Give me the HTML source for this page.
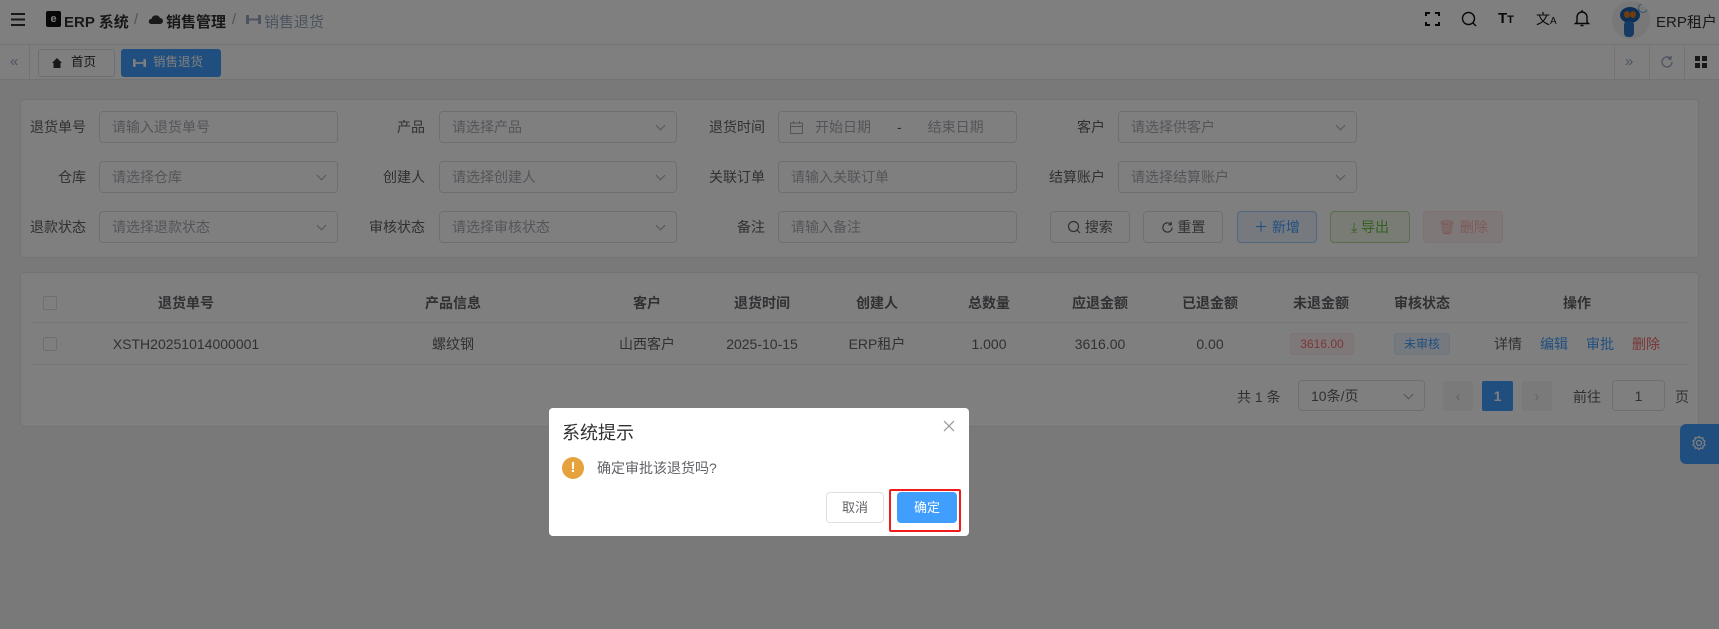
<!DOCTYPE html>
<html><head><meta charset="utf-8">
<style>
*{box-sizing:border-box;margin:0;padding:0}
body{width:1719px;height:629px;overflow:hidden;background:#f2f3f5;font-family:"Liberation Sans","Noto Sans CJK SC",sans-serif;font-size:14px;color:#606266;position:relative}
.a{position:absolute}
.hdr{left:0;top:0;width:1719px;height:45px;background:#fff;border-bottom:1px solid #e6e6e6}
.tabs{left:0;top:45px;width:1719px;height:35px;background:#fff;border-bottom:1px solid #e6e6e6}
.card{background:#fff;border:1px solid #e4e7ed;border-radius:4px}
.lbl{font-size:14px;color:#606266;text-align:right;width:80px;line-height:32px}
.inp{height:32px;border:1px solid #dcdfe6;border-radius:4px;background:#fff;color:#a8abb2;line-height:30px;padding-left:12px;font-size:14px}
.inp .ar{position:absolute;right:12px;top:10px;width:7px;height:7px;border-right:1px solid #a8abb2;border-bottom:1px solid #a8abb2;transform:rotate(45deg)}
.btn{height:32px;width:80px;border:1px solid #dcdfe6;border-radius:4px;background:#fff;line-height:30px;text-align:center;font-size:14px;color:#606266}
.th{font-weight:bold;color:#606266;text-align:center;line-height:20px}
.td{text-align:center;line-height:20px;color:#606266}
.cb{width:14px;height:14px;border:1px solid #dcdfe6;border-radius:2px;background:#fff}
.ov{left:0;top:0;width:1719px;height:629px;background:rgba(0,0,0,.5);z-index:5}
.dlg{z-index:10}
</style></head><body>
<div class="a hdr"></div>
<svg class="a" style="left:11px;top:13px" width="14" height="13" viewBox="0 0 14 13"><rect x="0" y="0" width="14" height="2" fill="#303133"/><rect x="0" y="5.5" width="14" height="2" fill="#303133"/><rect x="0" y="11" width="14" height="2" fill="#303133"/></svg>
<div class="a" style="left:46px;top:11px;width:15px;height:16px;background:#111;border-radius:2px;color:#fff;font-size:11px;font-weight:bold;text-align:center;line-height:16px">e</div>
<div class="a" style="left:64px;top:11px;font-size:15px;font-weight:bold;color:#303133">ERP 系统</div>
<div class="a" style="left:134px;top:11px;font-size:15px;color:#97a8be">/</div>
<svg class="a" style="left:148px;top:12px" width="15" height="13" viewBox="0 0 15 13"><path d="M3 12h9a3 3 0 0 0 0-6 4.5 4.5 0 0 0-8.5 1A2.5 2.5 0 0 0 3 12z" fill="#303133"/></svg>
<div class="a" style="left:166px;top:11px;font-size:15px;font-weight:bold;color:#303133">销售管理</div>
<div class="a" style="left:232px;top:11px;font-size:15px;color:#97a8be">/</div>
<svg class="a" style="left:246px;top:15px" width="15" height="9" viewBox="0 0 15 9"><rect x="0" y="0" width="3" height="9" fill="#97a8be"/><rect x="12" y="0" width="3" height="9" fill="#97a8be"/><rect x="3" y="3.5" width="9" height="2" fill="#97a8be"/></svg>
<div class="a" style="left:264px;top:11px;font-size:15px;color:#97a8be">销售退货</div>
<svg class="a" style="left:1425px;top:12px" width="15" height="14" viewBox="0 0 15 14" fill="none" stroke="#111" stroke-width="2"><path d="M1 4V1h4M10 1h4v3M14 10v3h-4M5 13H1v-3"/></svg>
<svg class="a" style="left:1461px;top:11px" width="16" height="16" viewBox="0 0 16 16" fill="none" stroke="#111" stroke-width="1.4"><circle cx="7.5" cy="7.5" r="6"/><path d="M12 12l3 3"/></svg>
<div class="a" style="left:1498px;top:10px;font-size:15px;font-weight:bold;color:#111">T<span style="font-size:11px">T</span></div>
<div class="a" style="left:1536px;top:9px;font-size:14px;color:#111">文<span style="font-size:10px">A</span></div>
<svg class="a" style="left:1574px;top:9px" width="16" height="18" viewBox="0 0 16 18" fill="none" stroke="#111" stroke-width="1.4"><path d="M3 13V8a5 5 0 0 1 10 0v5l1.5 1.5h-13z"/><path d="M8 1v2M6.5 16.5h3"/></svg>
<div class="a" style="left:1612px;top:1px;width:38px;height:38px;border-radius:50%;background:#f0f0f0;overflow:hidden"><div class="a" style="left:8px;top:6px;width:20px;height:16px;background:#1b5fae;border-radius:50%"></div><div class="a" style="left:12px;top:10px;width:6px;height:7px;background:#e07b20;border-radius:50%"></div><div class="a" style="left:18px;top:10px;width:6px;height:7px;background:#e07b20;border-radius:50%"></div><div class="a" style="left:12px;top:20px;width:10px;height:16px;background:#2a74c8;border-radius:4px"></div><div class="a" style="left:26px;top:2px;width:10px;height:10px;border:1px solid #6aa5e6;border-radius:50%"></div></div>
<div class="a" style="left:1656px;top:11px;font-size:15px;color:#303133">ERP租户</div>

<div class="a tabs"></div>
<div class="a" style="left:10px;top:53px;font-size:15px;color:#97a8be">«</div>
<div class="a" style="left:29px;top:45px;width:1px;height:35px;background:#e6e6e6"></div>
<div class="a" style="left:38px;top:49px;width:77px;height:28px;border:1px solid #d8dce5;border-radius:3px;background:#fff"></div>
<svg class="a" style="left:52px;top:58px" width="10" height="10" viewBox="0 0 10 10"><path d="M5 0L0 5h1.5v5h7V5H10z" fill="#303133"/></svg>
<div class="a" style="left:71px;top:54px;font-size:12.5px;line-height:16px;color:#303133">首页</div>
<div class="a" style="left:121px;top:49px;width:100px;height:28px;background:#409eff;border-radius:3px"></div>
<svg class="a" style="left:133px;top:59px" width="13" height="8" viewBox="0 0 15 9"><rect x="0" y="0" width="3" height="9" fill="#fff"/><rect x="12" y="0" width="3" height="9" fill="#fff"/><rect x="3" y="3.5" width="9" height="2" fill="#fff"/></svg>
<div class="a" style="left:153px;top:54px;font-size:12.5px;line-height:16px;color:#fff">销售退货</div>
<div class="a" style="left:1614px;top:45px;width:1px;height:35px;background:#e6e6e6"></div>
<div class="a" style="left:1649px;top:45px;width:1px;height:35px;background:#e6e6e6"></div>
<div class="a" style="left:1684px;top:45px;width:1px;height:35px;background:#e6e6e6"></div>
<div class="a" style="left:1625px;top:53px;font-size:15px;color:#97a8be">»</div>
<svg class="a" style="left:1660px;top:55px" width="14" height="14" viewBox="0 0 14 14" fill="none" stroke="#97a8be" stroke-width="1.3"><path d="M12 7a5 5 0 1 1-1.5-3.6M11 1v3H8"/></svg>
<svg class="a" style="left:1695px;top:56px" width="12" height="12" viewBox="0 0 12 12" fill="#303133"><rect width="5" height="5"/><rect x="7" width="5" height="5"/><rect y="7" width="5" height="5"/><rect x="7" y="7" width="5" height="5"/></svg>

<div class="a card" style="left:20px;top:99px;width:1679px;height:159px"></div>
<div class="a lbl" style="left:6px;top:111px">退货单号</div>
<div class="a inp" style="left:99px;top:111px;width:239px">请输入退货单号</div>
<div class="a lbl" style="left:345px;top:111px">产品</div>
<div class="a inp" style="left:439px;top:111px;width:238px">请选择产品<i class="ar"></i></div>
<div class="a lbl" style="left:685px;top:111px">退货时间</div>
<div class="a inp" style="left:778px;top:111px;width:239px;padding-left:38px"><svg class="a" style="left:11px;top:9px" width="13" height="13" viewBox="0 0 13 13" fill="none" stroke="#a8abb2"><rect x=".5" y="2" width="12" height="10.5"/><path d="M.5 5.5h12M3.5 0v3M9.5 0v3"/></svg><span style="margin-left:-2px">开始日期</span><span style="margin-left:26px;color:#606266">-</span><span style="margin-left:26px">结束日期</span></div>
<div class="a lbl" style="left:1025px;top:111px">客户</div>
<div class="a inp" style="left:1118px;top:111px;width:239px">请选择供客户<i class="ar"></i></div>

<div class="a lbl" style="left:6px;top:161px">仓库</div>
<div class="a inp" style="left:99px;top:161px;width:239px">请选择仓库<i class="ar"></i></div>
<div class="a lbl" style="left:345px;top:161px">创建人</div>
<div class="a inp" style="left:439px;top:161px;width:238px">请选择创建人<i class="ar"></i></div>
<div class="a lbl" style="left:685px;top:161px">关联订单</div>
<div class="a inp" style="left:778px;top:161px;width:239px">请输入关联订单</div>
<div class="a lbl" style="left:1025px;top:161px">结算账户</div>
<div class="a inp" style="left:1118px;top:161px;width:239px">请选择结算账户<i class="ar"></i></div>

<div class="a lbl" style="left:6px;top:211px">退款状态</div>
<div class="a inp" style="left:99px;top:211px;width:239px">请选择退款状态<i class="ar"></i></div>
<div class="a lbl" style="left:345px;top:211px">审核状态</div>
<div class="a inp" style="left:439px;top:211px;width:238px">请选择审核状态<i class="ar"></i></div>
<div class="a lbl" style="left:685px;top:211px">备注</div>
<div class="a inp" style="left:778px;top:211px;width:239px">请输入备注</div>
<div class="a btn" style="left:1050px;top:211px"><svg style="vertical-align:-2px" width="14" height="14" viewBox="0 0 14 14" fill="none" stroke="#606266" stroke-width="1.2"><circle cx="6.5" cy="6.5" r="5"/><path d="M10 10l3 3"/></svg> 搜索</div>
<div class="a btn" style="left:1143px;top:211px"><svg style="vertical-align:-2px" width="13" height="13" viewBox="0 0 14 14" fill="none" stroke="#606266" stroke-width="1.3"><path d="M12 7a5 5 0 1 1-1.5-3.6M11 1v3H8"/></svg> 重置</div>
<div class="a btn" style="left:1237px;top:211px;background:#ecf5ff;border-color:#a0cfff;color:#409eff">＋ 新增</div>
<div class="a btn" style="left:1330px;top:211px;background:#f0f9eb;border-color:#b3e19d;color:#67c23a">⤓ 导出</div>
<div class="a btn" style="left:1423px;top:211px;background:#fef0f0;border-color:#fde2e2;color:#f9b3b3">🗑 删除</div>

<div class="a card" style="left:20px;top:272px;width:1679px;height:155px"></div>
<div class="a" style="left:31px;top:322px;width:1657px;height:1px;background:#ebeef5"></div>
<div class="a" style="left:31px;top:364px;width:1657px;height:1px;background:#ebeef5"></div>
<div class="a cb" style="left:43px;top:296px"></div>
<div class="a cb" style="left:43px;top:337px"></div>
<div class="a th" style="left:106px;top:293px;width:160px">退货单号</div>
<div class="a th" style="left:373px;top:293px;width:160px">产品信息</div>
<div class="a th" style="left:597px;top:293px;width:100px">客户</div>
<div class="a th" style="left:712px;top:293px;width:100px">退货时间</div>
<div class="a th" style="left:827px;top:293px;width:100px">创建人</div>
<div class="a th" style="left:939px;top:293px;width:100px">总数量</div>
<div class="a th" style="left:1050px;top:293px;width:100px">应退金额</div>
<div class="a th" style="left:1160px;top:293px;width:100px">已退金额</div>
<div class="a th" style="left:1271px;top:293px;width:100px">未退金额</div>
<div class="a th" style="left:1372px;top:293px;width:100px">审核状态</div>
<div class="a th" style="left:1527px;top:293px;width:100px">操作</div>
<div class="a td" style="left:86px;top:334px;width:200px">XSTH20251014000001</div>
<div class="a td" style="left:373px;top:334px;width:160px">螺纹钢</div>
<div class="a td" style="left:597px;top:334px;width:100px">山西客户</div>
<div class="a td" style="left:712px;top:334px;width:100px">2025-10-15</div>
<div class="a td" style="left:827px;top:334px;width:100px">ERP租户</div>
<div class="a td" style="left:939px;top:334px;width:100px">1.000</div>
<div class="a td" style="left:1050px;top:334px;width:100px">3616.00</div>
<div class="a td" style="left:1160px;top:334px;width:100px">0.00</div>
<div class="a" style="left:1290px;top:333px;width:64px;height:22px;background:#fef0f0;border:1px solid #fde2e2;border-radius:4px;color:#f56c6c;font-size:12px;text-align:center;line-height:20px">3616.00</div>
<div class="a" style="left:1394px;top:333px;width:56px;height:22px;background:#ecf5ff;border:1px solid #d9ecff;border-radius:4px;color:#409eff;font-size:12px;text-align:center;line-height:20px">未审核</div>
<div class="a" style="left:1494px;top:334px;line-height:20px;color:#606266">详情</div>
<div class="a" style="left:1540px;top:334px;line-height:20px;color:#409eff">编辑</div>
<div class="a" style="left:1586px;top:334px;line-height:20px;color:#409eff">审批</div>
<div class="a" style="left:1632px;top:334px;line-height:20px;color:#f56c6c">删除</div>
<div class="a" style="left:1237px;top:387px;line-height:20px">共 1 条</div>
<div class="a inp" style="left:1298px;top:380px;width:127px;height:31px;color:#606266">10条/页<i class="ar"></i></div>
<div class="a" style="left:1443px;top:381px;width:30px;height:30px;background:#f4f4f5;border-radius:2px;color:#c0c4cc;text-align:center;line-height:30px">‹</div>
<div class="a" style="left:1482px;top:381px;width:31px;height:30px;background:#409eff;border-radius:2px;color:#fff;font-weight:bold;text-align:center;line-height:30px">1</div>
<div class="a" style="left:1522px;top:381px;width:30px;height:30px;background:#f4f4f5;border-radius:2px;color:#c0c4cc;text-align:center;line-height:30px">›</div>
<div class="a" style="left:1573px;top:387px;line-height:20px">前往</div>
<div class="a inp" style="left:1612px;top:380px;width:53px;height:31px;color:#606266;text-align:center;padding:0">1</div>
<div class="a" style="left:1675px;top:387px;line-height:20px">页</div>
<div class="a" style="left:1680px;top:424px;width:39px;height:40px;background:#409eff;border-radius:6px 0 0 6px"></div>
<svg class="a" style="left:1691px;top:435px" width="16" height="16" viewBox="0 0 16 16" fill="none" stroke="#fff" stroke-width="1.3"><circle cx="8" cy="8" r="2.5"/><path d="M8 1.5l1.5 1.6 2.2-.3.4 2.2 1.9 1.1-1 2 1 2-1.9 1.1-.4 2.2-2.2-.3L8 14.5l-1.5-1.6-2.2.3-.4-2.2-1.9-1.1 1-2-1-2 1.9-1.1.4-2.2 2.2.3z"/></svg>

<div class="a ov"></div>

<div class="a dlg" style="left:549px;top:408px;width:420px;height:128px;background:#fff;border-radius:4px"></div>
<div class="a dlg" style="left:562px;top:421px;font-size:18px;color:#303133;line-height:24px">系统提示</div>
<svg class="a dlg" style="left:943px;top:420px" width="12" height="12" viewBox="0 0 12 12" stroke="#909399" stroke-width="1.2"><path d="M1 1l10 10M11 1L1 11"/></svg>
<div class="a dlg" style="left:562px;top:457px;width:22px;height:22px;border-radius:50%;background:#e6a23c;color:#fff;font-weight:bold;text-align:center;line-height:22px;font-size:15px">!</div>
<div class="a dlg" style="left:597px;top:458px;font-size:14px;color:#606266;line-height:20px">确定审批该退货吗?</div>
<div class="a dlg" style="left:826px;top:492px;width:58px;height:31px;border:1px solid #dcdfe6;border-radius:4px;text-align:center;line-height:29px;font-size:13px;color:#606266;background:#fff">取消</div>
<div class="a dlg" style="left:897px;top:492px;width:60px;height:31px;background:#409eff;border-radius:4px;text-align:center;line-height:31px;font-size:13px;color:#fff">确定</div>
<div class="a dlg" style="left:889px;top:489px;width:72px;height:43px;border:2px solid #f21b1b;border-radius:2px"></div>
</body></html>
